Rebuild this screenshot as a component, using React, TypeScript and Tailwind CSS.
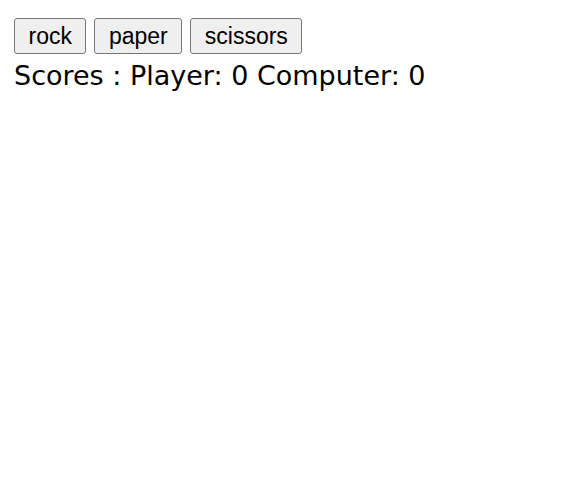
const choices = ['rock', 'paper', 'scissors'];

export default function App() {
    return (
        <div className="bg-white min-h-[500px] px-[14px] pt-[18px]">
            <div className="flex gap-2">
                {choices.map((choice) => (
                    <button
                        key={choice}
                        type="button"
                        className="h-9 px-[13.5px] bg-[#efefef] border border-[#767676] rounded-[3px] text-[23px] leading-none text-black font-['Liberation_Sans',Arial,sans-serif]"
                    >
                        {choice}
                    </button>
                ))}
            </div>
            <div className="mt-[4px] text-[27px] leading-[36px] text-black font-['DejaVu_Sans',sans-serif]">
                Scores : Player: 0 Computer: 0
            </div>
        </div>
    );
}
